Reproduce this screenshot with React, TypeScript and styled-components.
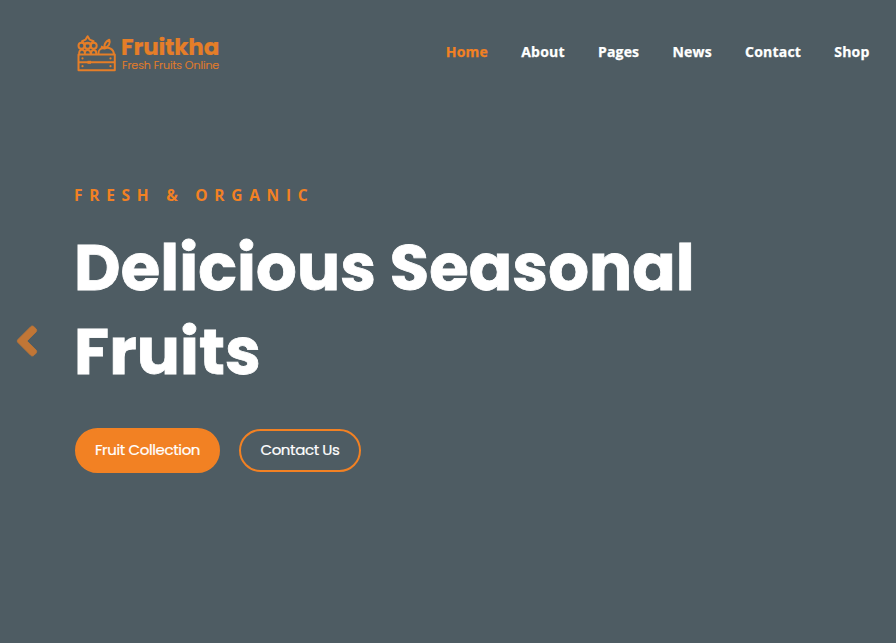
import React from "react";
import styled, { createGlobalStyle } from "styled-components";
import { FaAngleLeft } from "react-icons/fa";

const orange = "#f28123";

const GlobalStyle = createGlobalStyle`
  * { box-sizing: border-box; }
  body { margin: 0; background: #4e5c63; overflow: hidden; }
`;

const Page = styled.div`
  height: 643px;
  background: #4e5c63;
  color: #fff;
  font-family: "Open Sans", sans-serif;
`;

const Header = styled.header`
  display: flex;
  justify-content: space-between;
  height: 104px;
  padding: 34px 26.5px 0 77px;
`;

const Logo = styled.a`
  display: flex;
  gap: 5px;
  height: 38px;
  color: ${orange};
  opacity: 0.92;
`;

const LogoText = styled.div`
  display: flex;
  flex-direction: column;
  font-family: Poppins, Inter, sans-serif;
  white-space: nowrap;
`;

const LogoName = styled.span`
  font-size: 23px;
  font-weight: 700;
  line-height: 26px;
  letter-spacing: -0.15px;
  -webkit-text-stroke: 0.2px currentColor;
`;

const LogoTagline = styled.span`
  padding-left: 1px;
  font-size: 11px;
  font-weight: 300;
  line-height: 11px;
  letter-spacing: -0.03px;
  -webkit-text-stroke: 0.2px currentColor;
`;

const Nav = styled.nav`
  display: flex;
  gap: 33.2px;
  padding-top: 8px;
`;

const NavLink = styled.a<{ $active?: boolean }>`
  color: ${(p) => (p.$active ? orange : "#fff")};
  font-size: 14px;
  font-weight: 700;
  line-height: 20px;
  letter-spacing: 0.2px;
  -webkit-text-stroke: 0.25px currentColor;
`;

const Hero = styled.main`
  display: flex;
  align-items: flex-start;
`;

const PreviousButton = styled.button`
  display: flex;
  width: 75px;
  margin-top: 213px;
  padding: 0 0 0 3px;
  border: 0;
  background: none;
  color: ${orange};
  opacity: 0.7;
`;

const PreviousIcon = styled(FaAngleLeft)`
  stroke: currentColor;
  stroke-width: 8px;
`;

const HeroContent = styled.div`
  padding-top: 79px;
`;

const Subtitle = styled.p`
  margin: 0 0 0 -1px;
  color: ${orange};
  font-size: 15.5px;
  font-weight: 700;
  line-height: 24px;
  letter-spacing: 6.72px;
`;

const Title = styled.h1`
  margin: 19px 0 0 -1px;
  font-family: Poppins, Inter, sans-serif;
  font-size: 64px;
  font-weight: 700;
  line-height: 84px;
  letter-spacing: 0.12px;
  -webkit-text-stroke: 0.8px currentColor;
  white-space: nowrap;
`;

const Actions = styled.div`
  display: flex;
  align-items: center;
  gap: 19px;
  margin-top: 34px;
`;

const Button = styled.a<{ $outlined?: boolean }>`
  display: flex;
  align-items: center;
  justify-content: center;
  width: ${(p) => (p.$outlined ? 122 : 145)}px;
  height: ${(p) => (p.$outlined ? 43 : 45)}px;
  padding-bottom: 2px;
  border: 2px solid ${orange};
  border-radius: 50px;
  background: ${(p) => (p.$outlined ? "transparent" : orange)};
  font-family: Poppins, Inter, sans-serif;
  font-size: 15px;
  font-weight: 400;
  letter-spacing: -0.38px;
  -webkit-text-stroke: 0.2px currentColor;
  white-space: nowrap;
`;

const CrateIcon = () => (
  <svg width="39" height="38" viewBox="0 0 39 38" fill="none" stroke="currentColor" strokeWidth="2" strokeLinejoin="round">
    <path d="M1.5 20.5h36.3v15.7H1.5zM1.5 28.3h36.3" />
    <path d="M5 7.2l3.600-1.600 2-3.400 2 3.400 4 1.600-2.400 2.300H7z" />
    <circle cx="4.5" cy="11.7" r="3" />
    <circle cx="10.6" cy="11.7" r="3" />
    <circle cx="16.7" cy="11.7" r="3" />
    <path d="M2.300 20c-1-5 5-6 5.600-1M8 20c-1-5.500 5.500-5.500 5.800 0M14 20c0-5.500 5.500-5 5.300 0" />
    <path d="M21.500 20c-.5-4 2.500-6.500 6-5.500 4-2 9 .5 9.500 5.500M27.500 14c-.5-3 1.500-6.500 4.800-8.300 1.500 3.500-.8 7-4.800 8.300zM24 12.300l3.500 1.800" />
    <path d="M10.500 28.300h3.500" strokeWidth="3" />
    <g fill="currentColor" stroke="none">
      <circle cx="5.5" cy="24.4" r="1.1" /><circle cx="33.5" cy="24.4" r="1.1" />
      <circle cx="5.5" cy="32.2" r="1.1" /><circle cx="33.5" cy="32.2" r="1.1" />
    </g>
  </svg>
);

const links = ["Home", "About", "Pages", "News", "Contact", "Shop"];

export default function App() {
  return (
    <Page>
      <GlobalStyle />
      <Header>
        <Logo>
          <CrateIcon />
          <LogoText>
            <LogoName>Fruitkha</LogoName>
            <LogoTagline>Fresh Fruits Online</LogoTagline>
          </LogoText>
        </Logo>
        <Nav>
          {links.map((link) => (
            <NavLink key={link} $active={link === "Home"}>{link}</NavLink>
          ))}
        </Nav>
      </Header>
      <Hero>
        <PreviousButton aria-label="Previous slide">
          <PreviousIcon size={48} />
        </PreviousButton>
        <HeroContent>
          <Subtitle>FRESH &amp; ORGANIC</Subtitle>
          <Title>
            Delicious Seasonal
            <br />
            Fruits
          </Title>
          <Actions>
            <Button>Fruit Collection</Button>
            <Button $outlined>Contact Us</Button>
          </Actions>
        </HeroContent>
      </Hero>
    </Page>
  );
}
